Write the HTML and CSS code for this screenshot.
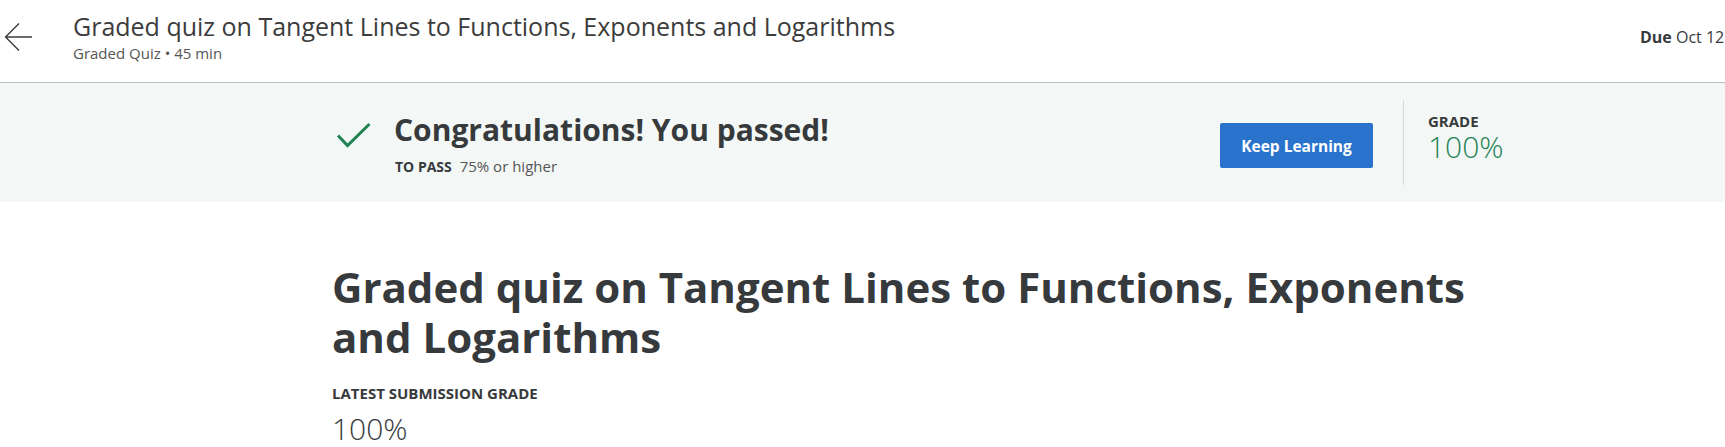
FILE: index.html
```html
<!DOCTYPE html>
<html lang="en">
<head>
<meta charset="utf-8">
<title>Graded quiz</title>
<link rel="stylesheet" href="styles.css">
</head>
<body>
<header class="topbar">
  <div class="back">
    <svg width="30" height="30" viewBox="0 0 30 30" fill="none" stroke="#3c3c3c" stroke-width="1.4">
      <path d="M28 15H2M15 1.5L1.5 15L15 28.5"/>
    </svg>
  </div>
  <div class="titles">
    <div class="top-title">Graded quiz on Tangent Lines to Functions, Exponents and Logarithms</div>
    <div class="top-sub">Graded Quiz • 45 min</div>
  </div>
  <div class="due"><b>Due</b> Oct 12</div>
</header>
<section class="banner">
  <div class="banner-inner">
    <div class="pass">
      <svg class="check" width="36" height="28" viewBox="0 0 36 28" fill="none" stroke="#1f8354" stroke-width="3">
        <path d="M2 13.5L11.5 23.5L33.5 2"/>
      </svg>
      <div class="pass-text">
        <div class="congrats">Congratulations! You passed!</div>
        <div class="topass"><b>TO PASS</b> 75% or higher</div>
      </div>
    </div>
    <button class="keep">Keep Learning</button>
    <div class="grade">
      <div class="label grade-label">GRADE</div>
      <div class="grade-val">100%</div>
    </div>
  </div>
</section>
<main class="content">
  <h1 class="quiz-title">Graded quiz on Tangent Lines to Functions, Exponents and Logarithms</h1>
  <div class="label">LATEST SUBMISSION GRADE</div>
  <div class="latest">100%</div>
</main>
</body>
</html>
```

FILE: styles.css
```css
* { box-sizing: border-box; }
html, body { margin: 0; padding: 0; overflow: hidden; }
body {
  font-family: "Open Sans", "Noto Sans", sans-serif;
  color: #373a3c;
  background: #fff;
  width: 1725px;
}
.topbar {
  height: 83px;
  border-bottom: 1px solid #bdbdbd;
  display: flex;
  align-items: flex-start;
  position: relative;
}
.back {
  width: 73px;
  padding: 22px 0 0 4px;
}
.back svg { display: block; }
.titles { padding-top: 9px; }
.top-title {
  font-size: 25px;
  line-height: 34px;
  color: #3c3c3c;
}
.top-sub {
  font-size: 15px;
  line-height: 20px;
  color: #555;
}
.due {
  position: absolute;
  left: 1640px;
  top: 25px;
  font-size: 16px;
  line-height: 24px;
  white-space: nowrap;
  color: #373a3c;
}
.banner {
  background: #f3f8f6;
  height: 119px;
}
.banner-inner {
  display: flex;
  align-items: center;
  height: 100%;
  padding-left: 336px;
}
.pass {
  display: flex;
  align-items: flex-start;
  width: 884px;
}
.check { margin: 14px 22px 0 0; }
.congrats {
  font-size: 30px;
  font-weight: 700;
  line-height: 40px;
  margin-top: 2px;
}
.topass {
  font-size: 15px;
  line-height: 20px;
  color: #555;
  padding-left: 1px;
  margin-top: 6px;
}
.topass b {
  font-size: 14px;
  color: #373a3c;
  margin-right: 4px;
}
.keep {
  width: 153px;
  height: 45px;
  border: none;
  border-radius: 2px;
  background: #2a73cc;
  color: #fff;
  font-family: inherit;
  font-size: 15.5px;
  font-weight: 700;
  margin-top: 6px;
}
.grade {
  margin-left: 30px;
  border-left: 1px solid #dadada;
  height: 85px;
  padding: 13px 0 0 24px;
}
.label {
  font-size: 15px;
  font-weight: 700;
  line-height: 19px;
  color: #373a3c;
}
.grade-label { line-height: 17px; }
.grade-val {
  font-size: 30px;
  font-weight: 300;
  line-height: 34px;
  color: #1f8354;
}
.content {
  padding: 60px 0 0 332px;
  width: 1500px;
}
.quiz-title {
  font-size: 42px;
  line-height: 50px;
  font-weight: 700;
  margin: 0 0 22px;
  color: #373a3c;
}
.latest {
  font-size: 30px;
  font-weight: 300;
  line-height: 38px;
  margin-top: 7px;
  color: #373a3c;
}
```
